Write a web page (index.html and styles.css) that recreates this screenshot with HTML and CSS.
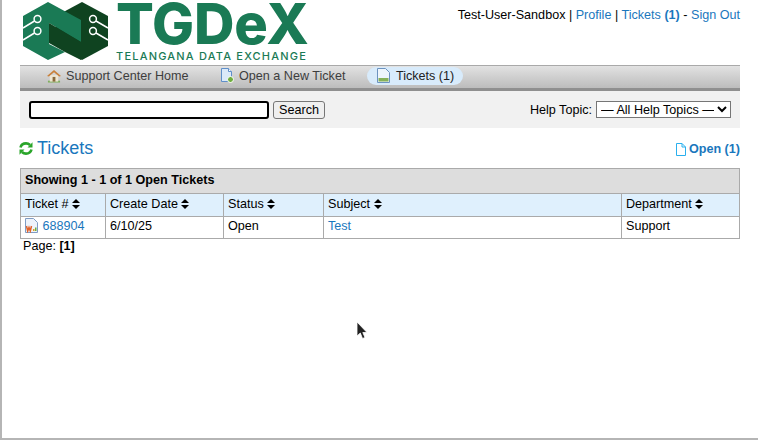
FILE: index.html
```html
<!DOCTYPE html>
<html lang="en">
  <head>
    <meta charset="UTF-8" />
    <title>Tickets</title>
    <link rel="stylesheet" href="styles.css">
  </head>
  <body>
    <div class="screen">
      <div id="container">
        <div id="header">
          <a class="logo" href="#">
            <svg class="logo-mark" width="86" height="60" viewBox="23 1 86 60">
              <polygon fill="#0f4320" points="82,2 108,16 108,46 82,60 56,46 56,16" />
              <polygon fill="#1a7a55" points="48,2 81,20 81,42 49,23 49,44 65,52 48,60 23,46 23,16" />
              <polygon fill="#0f4320" points="49,23 81,42 81,60 65,52 49,43" />
              <g fill="none" stroke="#fff" stroke-width="1.5">
                <circle cx="37.5" cy="19" r="3.4" />
                <circle cx="37.5" cy="31" r="3.4" />
                <circle cx="93" cy="19" r="3.4" />
                <circle cx="93" cy="31" r="3.4" />
                <path d="M34.5 21 23 28M34.5 33 23 40M96 21 108 28M96 33 108 40" />
              </g>
            </svg>
            <span class="logo-text">
              <span class="logo-name">TGDeX</span>
              <span class="logo-sub">TELANGANA DATA EXCHANGE</span>
            </span>
          </a>
          <p class="user-links">
            Test-User-Sandbox | <a href="#">Profile</a> | <a href="#">Tickets <b>(1)</b></a> - <a href="#">Sign Out</a>
          </p>
        </div>

        <ul id="nav">
          <li>
            <a href="#">
              <svg width="14" height="14" viewBox="0 0 15 14">
                <polygon fill="#7fae5c" points="1,12 14,12 14,14 1,14" />
                <rect x="3" y="6" width="9" height="7" fill="#efe6d2" />
                <rect x="6" y="8" width="3" height="5" fill="#8a6a3c" />
                <polygon fill="#c9803a" points="7.500,0.500 15,7 13,7.500 7.500,3 2,7.500 0,7" />
              </svg>
              Support Center Home
            </a>
          </li>
          <li>
            <a href="#">
              <svg width="14" height="15" viewBox="0 0 14 15">
                <path d="M1.500 .5h7l3 3v10h-10z" fill="#dbe9f8" stroke="#5f8fc9" />
                <path d="M8.500 .5v3h3" fill="#fff" stroke="#5f8fc9" />
                <circle cx="10.500" cy="11.500" r="3" fill="#6fae3f" stroke="#fff" />
              </svg>
              Open a New Ticket
            </a>
          </li>
          <li class="active">
            <a href="#">
              <svg width="13" height="15" viewBox="0 0 13 15">
                <path d="M.5 .5h8l4 4v10H.5z" fill="#eef5fc" stroke="#6c93bf" />
                <rect x="1.500" y="10" width="10" height="3.500" fill="#86b25a" />
              </svg>
              Tickets (1)
            </a>
          </li>
        </ul>

        <form class="search-bar">
          <div class="search-left">
            <input class="search-input" type="text" />
            <button class="search-btn" type="button">Search</button>
          </div>
          <label class="topic">
            Help Topic:
            <select class="topic-select">
              <option>— All Help Topics —</option>
            </select>
          </label>
        </form>

        <div class="title-row">
          <h1>
            <svg width="14" height="13" viewBox="0 0 14 13">
              <path d="M1.500 5.500C2.200 2.800 4.400 1.400 7 1.400c1.700 0 3 .6 4 1.600" fill="none" stroke="#2aa52a" stroke-width="2.600" />
              <polygon fill="#2aa52a" points="13.500,.3 13.500,5.500 8.500,5.500" />
              <path d="M12.500 7.500c-.7 2.700-2.900 4.100-5.500 4.100-1.700 0-3-.6-4-1.600" fill="none" stroke="#2aa52a" stroke-width="2.600" />
              <polygon fill="#2aa52a" points=".5,12.700 .5,7.500 5.500,7.500" />
            </svg>
            <a href="#">Tickets</a>
          </h1>
          <a class="state-link" href="#">
            <svg width="10" height="13" viewBox="0 0 10 13">
              <path d="M.5 .5h5.500l3.500 3.500v8.500H.5z" fill="#fff" stroke="#2ab0ee" />
              <path d="M6 .5v3.500h3.500" fill="none" stroke="#2ab0ee" />
            </svg>
            Open (1)
          </a>
        </div>

        <table class="tickets">
          <caption>Showing 1 - 1 of 1 Open Tickets</caption>
          <thead>
            <tr>
              <th class="col-id">Ticket # <svg class="sort" width="8" height="10" viewBox="0 0 8 10"><path d="M4 0 8 4H0zM4 10 0 6h8z" /></svg></th>
              <th class="col-date">Create Date <svg class="sort" width="8" height="10" viewBox="0 0 8 10"><path d="M4 0 8 4H0zM4 10 0 6h8z" /></svg></th>
              <th class="col-status">Status <svg class="sort" width="8" height="10" viewBox="0 0 8 10"><path d="M4 0 8 4H0zM4 10 0 6h8z" /></svg></th>
              <th class="col-subject">Subject <svg class="sort" width="8" height="10" viewBox="0 0 8 10"><path d="M4 0 8 4H0zM4 10 0 6h8z" /></svg></th>
              <th>Department <svg class="sort" width="8" height="10" viewBox="0 0 8 10"><path d="M4 0 8 4H0zM4 10 0 6h8z" /></svg></th>
            </tr>
          </thead>
          <tbody>
            <tr>
              <td>
                <svg class="file-icon" width="13" height="15" viewBox="0 0 13 15">
                  <path d="M.5 .5h8l4 4v10H.5z" fill="#eef3fa" stroke="#7f9cc4" />
                  <path d="M1.500 8l1.200 5 1.300-3.500 1.300 3.500 1.200-5" fill="none" stroke="#e2622a" stroke-width="1.500" />
                  <rect x="8" y="11" width="1.500" height="2" fill="#e0a020" />
                  <rect x="10" y="9.500" width="1.500" height="3.500" fill="#6fae3f" />
                </svg>
                <a href="#">688904</a>
              </td>
              <td>6/10/25</td>
              <td>Open</td>
              <td><a href="#">Test</a></td>
              <td>Support</td>
            </tr>
          </tbody>
        </table>
        <p class="pager">Page: <b>[1]</b></p>
      </div>

      <svg class="cursor" width="12" height="19" viewBox="0 0 12 19">
        <path d="M1 1v14l3.300-3 2.200 5.500 2.500-1-2.200-5H11z" fill="#222" stroke="#fff" stroke-width=".8" />
      </svg>
    </div>
  </body>
</html>
```

FILE: styles.css
```css
* {
  box-sizing: border-box;
}
body {
  margin: 0;
  background: #fff;
  color: #000;
  font-family: "Liberation Sans", Arial, sans-serif;
  font-size: 12.6px;
}
a {
  color: #1a77bd;
  text-decoration: none;
}

.screen {
  position: relative;
  height: 440px;
  border-left: 2px solid #b5b5b5;
  border-bottom: 2px solid #b5b5b5;
  overflow: hidden;
}
#container {
  width: 720px;
  margin-left: 18px;
}

#header {
  display: flex;
  justify-content: space-between;
  height: 65px;
}
.logo {
  display: flex;
  margin-left: 3px;
  padding-top: 1px;
}
.logo-mark {
  display: block;
}
.logo-text {
  display: flex;
  flex-direction: column;
  margin-left: 7px;
  color: #1a7a55;
  font-family: Inter, "Liberation Sans", sans-serif;
}
.logo-name {
  margin-top: 1px;
  font-size: 56px;
  font-weight: 800;
  line-height: 44px;
  letter-spacing: -0.1px;
}
.logo-sub {
  margin-top: 5px;
  font-size: 11px;
  font-weight: 500;
  line-height: 11px;
  letter-spacing: 1.200px;
  white-space: nowrap;
}
.user-links {
  margin: 8px 0 0;
  line-height: 15px;
}

#nav {
  display: flex;
  align-items: center;
  height: 26px;
  margin: 0;
  padding: 0 0 3px 27px;
  list-style: none;
  border-top: 1px solid #a9a9a9;
  border-bottom: 3px solid #8f8f8f;
  background: linear-gradient(#e2e2e2, #bcbcbc);
}
#nav li {
  height: 18px;
  margin-right: 31.500px;
}
#nav a {
  display: flex;
  align-items: center;
  gap: 5px;
  height: 18px;
  color: #3d3d3d;
}
#nav li.active {
  margin-left: -10px;
  padding: 0 9px 0 10px;
  border-radius: 10px;
  background: #d8ebfb;
}
#nav li.active a {
  gap: 6px;
  color: #222;
}

.search-bar {
  display: flex;
  justify-content: space-between;
  align-items: center;
  height: 37px;
  padding: 0 9px;
  background: #f1f1f1;
}
.search-left {
  display: flex;
  gap: 4px;
}
.search-input {
  width: 240px;
  height: 18px;
  padding: 0 2px;
  border: 2px solid #000;
  border-radius: 3px;
  background: #fff;
}
.search-btn {
  width: 52px;
  height: 18px;
  padding: 0;
  border: 1px solid #767676;
  border-radius: 3px;
  background: #efefef;
  color: #000;
  font-family: inherit;
  font-size: 12.6px;
}
.topic {
  display: flex;
  align-items: center;
  gap: 4px;
}
.topic-select {
  width: 135px;
  height: 17px;
  border: 1px solid #767676;
  border-radius: 0;
  background: #fff;
  font-family: inherit;
  font-size: 12.6px;
}

.title-row {
  display: flex;
  justify-content: space-between;
  align-items: flex-end;
  height: 40px;
  padding-bottom: 11px;
}
h1 {
  display: flex;
  align-items: center;
  gap: 4px;
  margin: 0 0 -1px -1px;
  font-size: 18px;
  font-weight: normal;
  line-height: 20px;
}
.state-link {
  display: flex;
  align-items: center;
  gap: 3px;
  font-weight: bold;
  line-height: 15px;
}

.tickets {
  width: 720px;
  table-layout: fixed;
  border-collapse: collapse;
  border: 1px solid #aaa;
}
.tickets caption {
  height: 25px;
  padding: 4px 4px 2px;
  border: 1px solid #aaa;
  border-bottom: 0;
  background: #ddd;
  font-weight: bold;
  text-align: left;
}
.tickets th,
.tickets td {
  height: 23px;
  padding: 0 4px 2px;
  border: 1px solid #aaa;
  font-weight: normal;
  text-align: left;
}
.tickets td {
  height: 22px;
  padding: 2px 4px 0;
  line-height: 15px;
  vertical-align: top;
}
.tickets th {
  background: #dff0fd;
}
.col-id {
  width: 85px;
}
.col-date {
  width: 118px;
}
.col-status {
  width: 100px;
}
.col-subject {
  width: 298px;
}
.sort {
  vertical-align: -1px;
}
.file-icon {
  margin: -3px 1px -3px 0;
}
.pager {
  margin: 0;
  padding: 0 3px;
  line-height: 15px;
}

.cursor {
  position: absolute;
  left: 354px;
  top: 321px;
}
```
